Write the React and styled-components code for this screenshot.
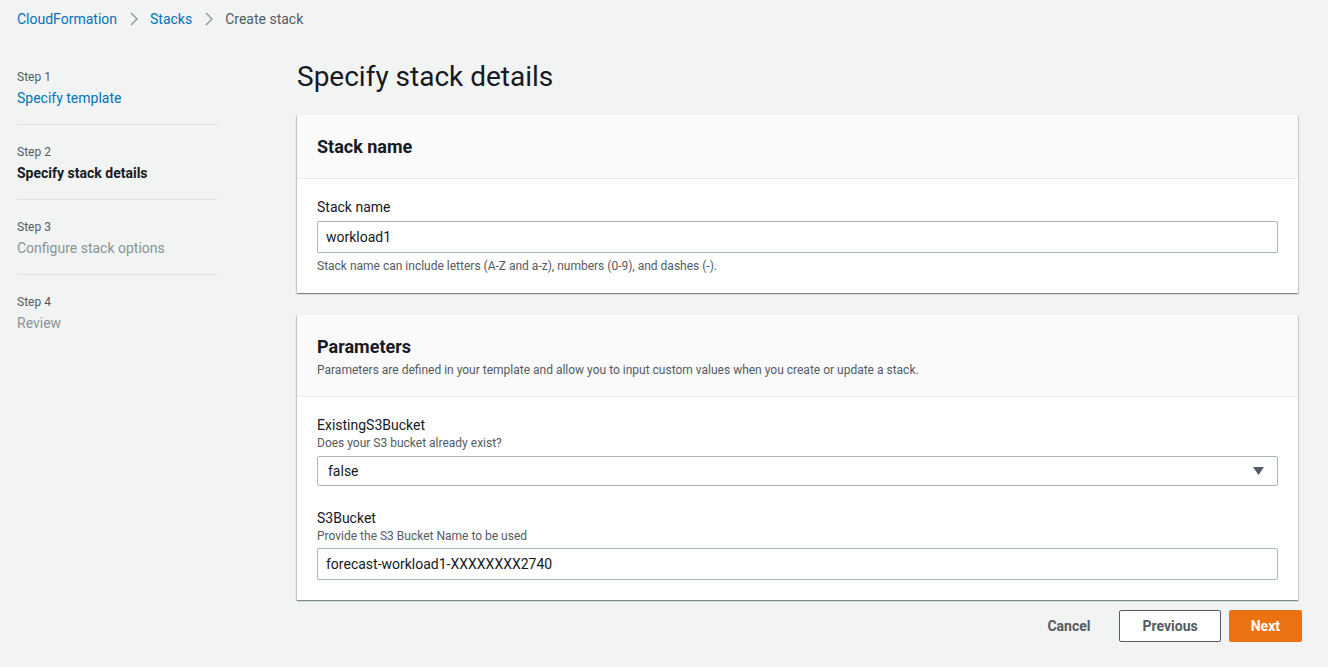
import styled, { createGlobalStyle } from "styled-components";

const GlobalStyle = createGlobalStyle`
  html, body {
    margin: 0;
    padding: 0;
    background: #f2f3f3;
    font-family: Roboto, "Noto Sans", Arial, sans-serif;
    color: #16191f;
  }
  * { box-sizing: border-box; }
`;

const Page = styled.div`
  padding: 9px 26px 0 17px;
  min-height: 667px;
`;

const Breadcrumbs = styled.nav`
  display: flex;
  align-items: center;
  height: 20px;
  font-size: 14px;
  line-height: 20px;
`;

const Crumb = styled.a`
  color: ${(p) => (p.$current ? "#545b64" : "#0073bb")};
  text-decoration: none;
`;

const Chevron = styled.svg`
  margin: 0 12px 0 13px;
  width: 8px;
  height: 14px;
`;

const Layout = styled.div`
  display: flex;
  margin-top: 29px;
  gap: 80px;
`;

const Sidebar = styled.ol`
  list-style: none;
  margin: 0;
  padding: 11px 0 0;
  width: 200px;
  flex-shrink: 0;
`;

const Step = styled.li`
  padding-bottom: 16px;
  margin-bottom: 19px;
  border-bottom: ${(p) => (p.$last ? "none" : "1px solid #dfe3e4")};
`;

const StepLabel = styled.div`
  font-size: 12px;
  line-height: 16px;
  color: #545b64;
`;

const StepTitle = styled.div`
  margin-top: 3px;
  font-size: 14px;
  line-height: 20px;
  color: ${(p) =>
    p.$state === "done" ? "#0073bb" : p.$state === "active" ? "#16191f" : "#879596"};
  font-weight: ${(p) => (p.$state === "active" ? 700 : 400)};
`;

const Main = styled.main`
  width: 1001px;
`;

const Title = styled.h1`
  margin: 1px 0 20px;
  font-size: 28px;
  line-height: 36px;
  font-weight: 400;
  color: #16191f;
`;

const Card = styled.section`
  background: #fff;
  margin-bottom: 22px;
  box-shadow: 0 1px 1px 0 rgba(0, 28, 36, 0.3), 1px 1px 1px 0 rgba(0, 28, 36, 0.15),
    -1px 1px 1px 0 rgba(0, 28, 36, 0.15);
`;

const CardHeader = styled.header`
  background: #fafafa;
  border-bottom: 1px solid #eaeded;
  padding: ${(p) => (p.$withDesc ? "21px 20px 18px" : "21px 20px 20px")};
`;

const CardTitle = styled.h2`
  margin: 0;
  font-size: 18px;
  line-height: 22px;
  font-weight: 700;
`;

const CardDesc = styled.p`
  margin: 4px 0 0;
  font-size: 12px;
  line-height: 16px;
  color: #545b64;
`;

const CardBody = styled.div`
  padding: ${(p) => (p.$top || 17)}px 20px ${(p) => (p.$bottom || 20)}px;
  display: flex;
  flex-direction: column;
  gap: 22px;
`;

const Field = styled.div`
  display: flex;
  flex-direction: column;
`;

const Label = styled.label`
  font-size: 14px;
  line-height: 20px;
  color: #16191f;
`;

const Description = styled.div`
  font-size: 12px;
  line-height: 16px;
  color: #545b64;
`;

const Hint = styled.div`
  margin-top: 5px;
  font-size: 12px;
  line-height: 16px;
  color: #545b64;
`;

const Control = styled.div`
  margin-top: ${(p) => (p.$tight ? "5px" : "4px")};
`;

const Input = styled.input`
  width: 100%;
  height: 32px;
  border: 1px solid #aab7b8;
  border-radius: 2px;
  padding: 0 8px;
  font-family: inherit;
  font-size: 14px;
  color: #16191f;
  background: #fff;
  outline: none;
`;

const SelectBox = styled.div`
  position: relative;
  display: flex;
  align-items: center;
  height: 30px;
  border: 1px solid #aab7b8;
  border-radius: 2px;
  padding: 0 10px;
  font-size: 14px;
  color: #16191f;
  background: #fff;
`;

const Caret = styled.svg`
  position: absolute;
  right: 13px;
  top: 10px;
  width: 11px;
  height: 8px;
`;

const Actions = styled.div`
  display: flex;
  justify-content: flex-end;
  align-items: center;
  gap: 8px;
  margin-top: -12px;
  margin-right: -4px;
`;

const Button = styled.button`
  height: 32px;
  padding: 0 ${(p) => (p.$pad || 20)}px;
  border-radius: 2px;
  font-family: inherit;
  font-size: 14px;
  font-weight: 700;
  cursor: pointer;
  border: 1px solid
    ${(p) => (p.$variant === "primary" ? "#ec7211" : p.$variant === "link" ? "transparent" : "#545b64")};
  background: ${(p) =>
    p.$variant === "primary" ? "#ec7211" : p.$variant === "link" ? "transparent" : "#fff"};
  color: ${(p) => (p.$variant === "primary" ? "#fff" : "#545b64")};
`;

const ChevronIcon = () => (
  <Chevron viewBox="0 0 8 14">
    <path d="M1 1l6 6-6 6" fill="none" stroke="#879596" strokeWidth="1.3" />
  </Chevron>
);

const steps = [
  { label: "Step 1", title: "Specify template", state: "done" },
  { label: "Step 2", title: "Specify stack details", state: "active" },
  { label: "Step 3", title: "Configure stack options", state: "todo" },
  { label: "Step 4", title: "Review", state: "todo" },
];

export default function App() {
  return (
    <Page>
      <GlobalStyle />
      <Breadcrumbs>
        <Crumb href="#">CloudFormation</Crumb>
        <ChevronIcon />
        <Crumb href="#">Stacks</Crumb>
        <ChevronIcon />
        <Crumb $current>Create stack</Crumb>
      </Breadcrumbs>

      <Layout>
        <Sidebar>
          {steps.map((s, i) => (
            <Step key={s.label} $last={i === steps.length - 1}>
              <StepLabel>{s.label}</StepLabel>
              <StepTitle $state={s.state}>{s.title}</StepTitle>
            </Step>
          ))}
        </Sidebar>

        <Main>
          <Title>Specify stack details</Title>

          <Card>
            <CardHeader>
              <CardTitle>Stack name</CardTitle>
            </CardHeader>
            <CardBody $top={18} $bottom={19}>
              <Field>
                <Label>Stack name</Label>
                <Control>
                  <Input defaultValue="workload1" />
                </Control>
                <Hint>Stack name can include letters (A-Z and a-z), numbers (0-9), and dashes (-).</Hint>
              </Field>
            </CardBody>
          </Card>

          <Card>
            <CardHeader $withDesc>
              <CardTitle>Parameters</CardTitle>
              <CardDesc>
                Parameters are defined in your template and allow you to input custom values when you
                create or update a stack.
              </CardDesc>
            </CardHeader>
            <CardBody $top={18}>
              <Field>
                <Label>ExistingS3Bucket</Label>
                <Description>Does your S3 bucket already exist?</Description>
                <Control $tight>
                  <SelectBox>
                    false
                    <Caret viewBox="0 0 11 8">
                      <path d="M0 0h11L5.5 8z" fill="#545b64" />
                    </Caret>
                  </SelectBox>
                </Control>
              </Field>
              <Field>
                <Label>S3Bucket</Label>
                <Description>Provide the S3 Bucket Name to be used</Description>
                <Control>
                  <Input defaultValue="forecast-workload1-XXXXXXXX2740" />
                </Control>
              </Field>
            </CardBody>
          </Card>

          <Actions>
            <Button $variant="link">Cancel</Button>
            <Button $pad={22}>Previous</Button>
            <Button $variant="primary" $pad={21}>Next</Button>
          </Actions>
        </Main>
      </Layout>
    </Page>
  );
}
